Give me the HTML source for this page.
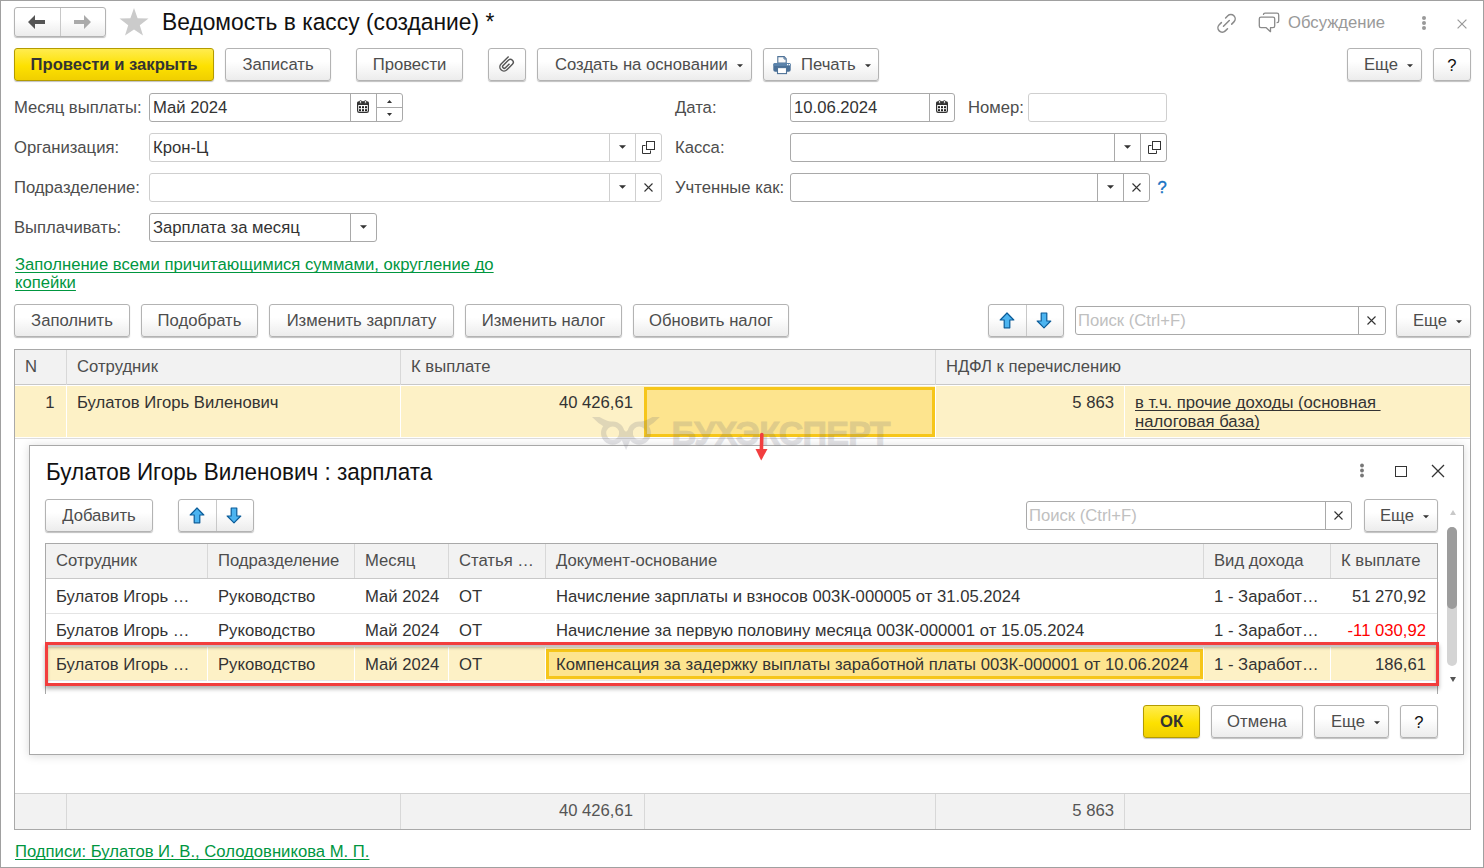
<!DOCTYPE html><html><head><meta charset="utf-8"><style>
*{margin:0;padding:0;box-sizing:border-box}
html,body{width:1484px;height:868px;overflow:hidden;background:#fff}
body{font-family:"Liberation Sans",sans-serif;font-size:16.67px;color:#4d4d4d;position:relative}
.t{position:absolute;white-space:nowrap}
.btn{position:absolute;padding-top:1px;border:1px solid #b3b3b3;border-radius:3px;background:linear-gradient(#fff 0%,#fff 40%,#ececec 100%);box-shadow:0 1px 1px rgba(0,0,0,.25);text-align:center;color:#4d4d4d;white-space:nowrap;font-size:16.67px}
.btn.yel{background:linear-gradient(#ffec4f 0%,#fde100 55%,#f0cf00 100%);border-color:#b39b00;color:#333;font-weight:bold}
.fld{position:absolute;border:1px solid #a9a9a9;border-radius:3px;background:#fff}
.fld.lt{border-color:#cfcfcf}
.dv{position:absolute;top:0;bottom:0;width:1px;background:#a9a9a9}
.fld.lt .dv{background:#cfcfcf}
.hl{position:absolute}
a,.lnk{color:#00963f;text-decoration:underline;text-underline-offset:2px;text-decoration-skip-ink:none}
.frame{position:absolute;left:0;top:0;width:1484px;height:868px;border:1px solid #a0a0a0;pointer-events:none;z-index:100}
</style></head><body><div class="frame"></div>
<div class="btn" style="left:14px;top:7px;width:92px;height:30px;"></div>
<div style="position:absolute;left:60px;top:8px;width:1px;height:28px;background:#c8c8c8"></div>
<svg style="position:absolute;left:28px;top:15px" width="18" height="14" viewBox="0 0 18 14"><path d="M0 7L7 0V5H17V9H7V14Z" fill="#555"/></svg>
<svg style="position:absolute;left:73px;top:15px" width="18" height="14" viewBox="0 0 18 14"><path d="M18 7L11 0V5H1V9H11V14Z" fill="#aaa"/></svg>
<svg style="position:absolute;left:119px;top:8px" width="30" height="28" viewBox="0 0 30 28"><path d="M15 0L18.6 10.3L29.5 10.6L20.8 17.2L24 27.6L15 21.4L6 27.6L9.2 17.2L0.5 10.6L11.4 10.3Z" fill="#cbcbcb"/></svg>
<div class="t" style="left:162px;top:8.1px;font-size:22.8px;line-height:28px;color:#111;transform:scaleY(1.06);transform-origin:0 21.9px">Ведомость в кассу (создание) *</div>
<svg style="position:absolute;left:1210px;top:8px" width="75" height="30" viewBox="1210 8 75 30"><g fill="none" stroke="#8a8a8a" stroke-width="1.5" stroke-linecap="round"><path d="M1225.6 18.0L1227.8 15.8A4.3 4.3 0 0 1 1233.9 21.9L1231.7 24.1"/><path d="M1221.4 22.6L1219.2 24.8A4.3 4.3 0 0 0 1225.3 30.9L1227.5 28.7"/><path d="M1223.5 26.2L1229.3 20.5"/></g><g fill="none" stroke="#8a8a8a" stroke-width="1.3" stroke-linejoin="round"><path d="M1261 17.1H1273Q1274.7 17.1 1274.7 18.8V26Q1274.7 27.7 1273 27.7H1270.5V31.7L1266.2 27.7H1261Q1259.3 27.7 1259.3 26V18.8Q1259.3 17.1 1261 17.1Z"/><path d="M1263.4 14.9Q1263.4 13.2 1265.1 13.2H1277Q1278.7 13.2 1278.7 14.9V20.9Q1278.7 22.6 1277 22.6H1276.6"/></g></svg>
<div class="t " style="top:12.72px;font-size:16.67px;line-height:20px;left:1288px;color:#999;">Обсуждение</div>
<svg style="position:absolute;left:1421px;top:15px" width="6" height="16" viewBox="0 0 6 16"><circle cx="3" cy="3" r="2" fill="#999"/><circle cx="3" cy="8" r="2" fill="#999"/><circle cx="3" cy="13" r="2" fill="#999"/></svg>
<svg style="position:absolute;left:1456.5px;top:18.5px" width="10" height="10" viewBox="0 0 10 10"><path d="M0.6 0.6L9.4 9.4M9.4 0.6L0.6 9.4" stroke="#999" stroke-width="1.2"/></svg>
<div class="btn yel" style="left:14px;top:48px;width:200px;height:33px;line-height:30px">Провести и закрыть</div>
<div class="btn" style="left:225px;top:48px;width:106px;height:33px;line-height:30px">Записать</div>
<div class="btn" style="left:356px;top:48px;width:107px;height:33px;line-height:30px">Провести</div>
<div class="btn" style="left:488px;top:48px;width:38px;height:33px;line-height:30px"><svg style="position:absolute;left:0;top:0" width="36" height="30" viewBox="0 0 36 30"><g transform="translate(17.3,15.6) rotate(45) scale(0.82) translate(-5,-9)"><path d="M0 0V13A5 5 0 0 0 10 13V3.5A3.5 3.5 0 0 0 3 3.5V12.5A2 2 0 0 0 7 12.5V5.5" fill="none" stroke="#555" stroke-width="1.75"/></g></svg></div>
<div class="btn" style="left:537px;top:48px;width:215px;height:33px;line-height:30px;text-align:left;padding-left:17px">Создать на основании<svg style="position:absolute;left:199px;top:15px" width="6" height="4" viewBox="0 0 6 4"><path d="M0 0.3H6L3 3.3Z" fill="#333"/></svg></div>
<div class="btn" style="left:763px;top:48px;width:116px;height:33px;line-height:30px;text-align:left;padding-left:37px">Печать<svg style="position:absolute;left:8px;top:6px" width="20" height="20" viewBox="0 0 20 20"><path d="M5.8 1.6H12.2L14.2 3.7V8H5.8Z" fill="#fafafa" stroke="#4f7398" stroke-width="1.1"/><path d="M12 1.8V4H14" fill="none" stroke="#4f7398" stroke-width="1"/><rect x="1.3" y="8.1" width="17.4" height="8.6" rx="2" fill="#4a7098"/><rect x="1.3" y="8.1" width="17.4" height="3" rx="1.5" fill="#5b83ab"/><rect x="15" y="9" width="1.2" height="1.2" fill="#fff"/><rect x="16.8" y="9" width="1.2" height="1.2" fill="#fff"/><rect x="5.5" y="12.6" width="9" height="6" fill="#fff" stroke="#4f7398" stroke-width="1.1"/></svg><svg style="position:absolute;left:101px;top:15px" width="6" height="4" viewBox="0 0 6 4"><path d="M0 0.3H6L3 3.3Z" fill="#333"/></svg></div>
<div class="btn" style="left:1347px;top:48px;width:75px;height:33px;line-height:30px;text-align:left;padding-left:16px">Еще<svg style="position:absolute;left:58.5px;top:14.7px" width="6" height="4" viewBox="0 0 6 4"><path d="M0 0.3H6L3 3.3Z" fill="#333"/></svg></div>
<div class="btn" style="left:1433px;top:48px;width:38px;height:33px;line-height:30px"><span style="color:#111;position:relative;top:1px">?</span></div>
<div class="t " style="top:98.22px;font-size:16.67px;line-height:20px;left:14px;color:#4d4d4d;">Месяц выплаты:</div>
<div class="t " style="top:138.22px;font-size:16.67px;line-height:20px;left:14px;color:#4d4d4d;">Организация:</div>
<div class="t " style="top:178.22px;font-size:16.67px;line-height:20px;left:14px;color:#4d4d4d;">Подразделение:</div>
<div class="t " style="top:218.22px;font-size:16.67px;line-height:20px;left:14px;color:#4d4d4d;">Выплачивать:</div>
<div class="t " style="top:98.22px;font-size:16.67px;line-height:20px;left:675px;color:#4d4d4d;">Дата:</div>
<div class="t " style="top:138.22px;font-size:16.67px;line-height:20px;left:675px;color:#4d4d4d;">Касса:</div>
<div class="t " style="top:178.22px;font-size:16.67px;line-height:20px;left:675px;color:#4d4d4d;">Учтенные как:</div>
<div class="t " style="top:98.22px;font-size:16.67px;line-height:20px;left:968px;color:#4d4d4d;">Номер:</div>
<div class="fld" style="left:149px;top:93px;width:254px;height:29px;"><div class="dv" style="left:200px"></div><div class="dv" style="left:226px"></div><svg style="position:absolute;left:207px;top:6px" width="12" height="13" viewBox="0 0 12 13"><rect x="0.6" y="1.8" width="10.8" height="10.6" rx="1.6" fill="#fff" stroke="#333" stroke-width="1.2"/><rect x="0.6" y="1.8" width="10.8" height="3.2" fill="#333"/><ellipse cx="3.6" cy="1.9" rx="1" ry="1.5" fill="#fff" stroke="#333" stroke-width="0.8"/><ellipse cx="8.4" cy="1.9" rx="1" ry="1.5" fill="#fff" stroke="#333" stroke-width="0.8"/><g fill="#222"><rect x="2" y="6.2" width="2" height="2"/><rect x="5" y="6.2" width="2" height="2"/><rect x="8" y="6.2" width="2" height="2"/><rect x="2" y="9.2" width="2" height="2"/><rect x="5" y="9.2" width="2" height="2"/><rect x="8" y="9.2" width="2" height="2"/></g></svg><div style="position:absolute;left:227px;top:13px;width:25px;height:1px;background:#a9a9a9"></div><svg style="position:absolute;left:236.5px;top:6px" width="5" height="3" viewBox="0 0 5 3"><path d="M0 3H5L2.5 0Z" fill="#333"/></svg><svg style="position:absolute;left:236.5px;top:19px" width="5" height="3" viewBox="0 0 5 3"><path d="M0 0H5L2.5 3Z" fill="#333"/></svg></div>
<div class="t " style="top:98.22px;font-size:16.67px;line-height:20px;left:153px;color:#333;">Май 2024</div>
<div class="fld lt" style="left:149px;top:133px;width:513px;height:29px;"><div class="dv" style="left:459px"></div><div class="dv" style="left:485px"></div><svg style="position:absolute;left:469px;top:11px" width="7" height="4" viewBox="0 0 7 4"><path d="M0 0.2H7L3.5 3.7Z" fill="#333"/></svg><svg style="position:absolute;left:492px;top:7px" width="13" height="13" viewBox="0 0 13 13"><path d="M3.5 4.5H0.5V12.5H8.5V9.5" fill="none" stroke="#333" stroke-width="1"/><rect x="4.5" y="0.5" width="8" height="8" fill="none" stroke="#333" stroke-width="1"/></svg></div>
<div class="t " style="top:138.22px;font-size:16.67px;line-height:20px;left:153px;color:#333;">Крон-Ц</div>
<div class="fld lt" style="left:149px;top:173px;width:513px;height:29px;"><div class="dv" style="left:459px"></div><div class="dv" style="left:485px"></div><svg style="position:absolute;left:469px;top:11px" width="7" height="4" viewBox="0 0 7 4"><path d="M0 0.2H7L3.5 3.7Z" fill="#333"/></svg><svg style="position:absolute;left:493.5px;top:9px" width="9" height="9" viewBox="0 0 9 9"><path d="M0.5 0.5L8.5 8.5M8.5 0.5L0.5 8.5" stroke="#333" stroke-width="1.1"/></svg></div>
<div class="fld" style="left:149px;top:213px;width:228px;height:29px;"><div class="dv" style="left:200px"></div><svg style="position:absolute;left:210px;top:11px" width="7" height="4" viewBox="0 0 7 4"><path d="M0 0.2H7L3.5 3.7Z" fill="#333"/></svg></div>
<div class="t " style="top:218.22px;font-size:16.67px;line-height:20px;left:153px;color:#333;">Зарплата за месяц</div>
<div class="fld" style="left:790px;top:93px;width:165px;height:29px;"><div class="dv" style="left:138px"></div><svg style="position:absolute;left:145px;top:6px" width="12" height="13" viewBox="0 0 12 13"><rect x="0.6" y="1.8" width="10.8" height="10.6" rx="1.6" fill="#fff" stroke="#333" stroke-width="1.2"/><rect x="0.6" y="1.8" width="10.8" height="3.2" fill="#333"/><ellipse cx="3.6" cy="1.9" rx="1" ry="1.5" fill="#fff" stroke="#333" stroke-width="0.8"/><ellipse cx="8.4" cy="1.9" rx="1" ry="1.5" fill="#fff" stroke="#333" stroke-width="0.8"/><g fill="#222"><rect x="2" y="6.2" width="2" height="2"/><rect x="5" y="6.2" width="2" height="2"/><rect x="8" y="6.2" width="2" height="2"/><rect x="2" y="9.2" width="2" height="2"/><rect x="5" y="9.2" width="2" height="2"/><rect x="8" y="9.2" width="2" height="2"/></g></svg></div>
<div class="t " style="top:98.22px;font-size:16.67px;line-height:20px;left:794px;color:#333;">10.06.2024</div>
<div class="fld lt" style="left:1028px;top:93px;width:139px;height:29px;"></div>
<div class="fld" style="left:790px;top:133px;width:377px;height:29px;"><div class="dv" style="left:323px"></div><div class="dv" style="left:349px"></div><svg style="position:absolute;left:333px;top:11px" width="7" height="4" viewBox="0 0 7 4"><path d="M0 0.2H7L3.5 3.7Z" fill="#333"/></svg><svg style="position:absolute;left:357px;top:7px" width="13" height="13" viewBox="0 0 13 13"><path d="M3.5 4.5H0.5V12.5H8.5V9.5" fill="none" stroke="#333" stroke-width="1"/><rect x="4.5" y="0.5" width="8" height="8" fill="none" stroke="#333" stroke-width="1"/></svg></div>
<div class="fld" style="left:790px;top:173px;width:360px;height:29px;"><div class="dv" style="left:306px"></div><div class="dv" style="left:332px"></div><svg style="position:absolute;left:316px;top:11px" width="7" height="4" viewBox="0 0 7 4"><path d="M0 0.2H7L3.5 3.7Z" fill="#333"/></svg><svg style="position:absolute;left:340.5px;top:9px" width="9" height="9" viewBox="0 0 9 9"><path d="M0.5 0.5L8.5 8.5M8.5 0.5L0.5 8.5" stroke="#333" stroke-width="1.1"/></svg></div>
<div class="t " style="top:178.22px;font-size:16.67px;line-height:20px;left:1157.5px;color:#1a73c4;-webkit-text-stroke:0.4px #1a73c4">?</div>
<div class="t lnk" style="top:254.72px;font-size:16.67px;line-height:20px;left:15px;">Заполнение всеми причитающимися суммами, округление до</div>
<div class="t lnk" style="top:272.92px;font-size:16.67px;line-height:20px;left:15px;">копейки</div>
<div class="btn" style="left:14px;top:304px;width:116px;height:33px;line-height:30px">Заполнить</div>
<div class="btn" style="left:141px;top:304px;width:117px;height:33px;line-height:30px">Подобрать</div>
<div class="btn" style="left:269px;top:304px;width:185px;height:33px;line-height:30px">Изменить зарплату</div>
<div class="btn" style="left:465px;top:304px;width:157px;height:33px;line-height:30px">Изменить налог</div>
<div class="btn" style="left:633px;top:304px;width:156px;height:33px;line-height:30px">Обновить налог</div>
<div class="btn" style="left:988px;top:304px;width:76px;height:33px"><div style="position:absolute;left:37px;top:0;bottom:0;width:1px;background:#c8c8c8"></div><svg style="position:absolute;left:10px;top:7px" width="16" height="17" viewBox="0 0 16 17"><path d="M8 1L14.8 8H10.8V15.8H5.2V8H1.2Z" fill="#4cb4f0" stroke="#0b5c99" stroke-width="1.2" stroke-linejoin="round"/></svg><svg style="position:absolute;left:47px;top:7px" width="16" height="17" viewBox="0 0 16 17"><path d="M5.2 1H10.8V9H14.8L8 15.8L1.2 9H5.2Z" fill="#4cb4f0" stroke="#0b5c99" stroke-width="1.2" stroke-linejoin="round"/></svg></div>
<div class="fld" style="left:1075px;top:306px;width:311px;height:29px;"><div class="dv" style="left:282px"></div><svg style="position:absolute;left:290.5px;top:9px" width="9" height="9" viewBox="0 0 9 9"><path d="M0.5 0.5L8.5 8.5M8.5 0.5L0.5 8.5" stroke="#333" stroke-width="1.1"/></svg></div>
<div class="t " style="top:311.22px;font-size:16.67px;line-height:20px;left:1078px;color:#c0c0c0;">Поиск (Ctrl+F)</div>
<div class="btn" style="left:1396px;top:304px;width:75px;height:33px;line-height:30px;text-align:left;padding-left:16px">Еще<svg style="position:absolute;left:58.5px;top:14.7px" width="6" height="4" viewBox="0 0 6 4"><path d="M0 0.3H6L3 3.3Z" fill="#333"/></svg></div>
<div style="position:absolute;left:14px;top:349px;width:1457px;height:481px;border:1px solid #a9a9a9;background:#fff"></div>
<div style="position:absolute;left:15px;top:350px;width:1455px;height:35px;background:#f2f2f2;border-bottom:1px solid #c8c8c8"></div>
<div style="position:absolute;left:66px;top:350px;width:1px;height:35px;background:#d8d8d8"></div>
<div style="position:absolute;left:400px;top:350px;width:1px;height:35px;background:#d8d8d8"></div>
<div style="position:absolute;left:935px;top:350px;width:1px;height:35px;background:#d8d8d8"></div>
<div class="t " style="top:357.22px;font-size:16.67px;line-height:20px;left:25px;color:#4d4d4d;">N</div>
<div class="t " style="top:357.22px;font-size:16.67px;line-height:20px;left:77px;color:#4d4d4d;">Сотрудник</div>
<div class="t " style="top:357.22px;font-size:16.67px;line-height:20px;left:411px;color:#4d4d4d;">К выплате</div>
<div class="t " style="top:357.22px;font-size:16.67px;line-height:20px;left:946px;color:#4d4d4d;">НДФЛ к перечислению</div>
<div style="position:absolute;left:15px;top:386px;width:1455px;height:51px;background:#fdf1c6"></div>
<div style="position:absolute;left:15px;top:438px;width:1455px;height:1px;background:#dedede"></div>
<div style="position:absolute;left:66px;top:386px;width:1px;height:51px;background:#fff"></div>
<div style="position:absolute;left:400px;top:386px;width:1px;height:51px;background:#fff"></div>
<div style="position:absolute;left:935px;top:386px;width:1px;height:51px;background:#fff"></div>
<div style="position:absolute;left:1124px;top:386px;width:1px;height:51px;background:#fff"></div>
<div style="position:absolute;left:644px;top:387px;width:291px;height:50px;background:#fde48e;border:3px solid #f6c61a"></div>
<div class="t " style="top:393.22px;font-size:16.67px;line-height:20px;right:1429.5px;color:#333;">1</div>
<div class="t " style="top:393.22px;font-size:16.67px;line-height:20px;left:77px;color:#333;">Булатов Игорь Виленович</div>
<div class="t " style="top:393.22px;font-size:16.67px;line-height:20px;right:851px;color:#333;">40 426,61</div>
<div class="t " style="top:393.22px;font-size:16.67px;line-height:20px;right:370px;color:#333;">5 863</div>
<div class="t " style="top:393.22px;font-size:16.67px;line-height:20px;left:1135px;color:#333;text-decoration:underline;text-underline-offset:2px;text-decoration-skip-ink:none">в т.ч. прочие доходы (основная&nbsp;</div>
<div class="t " style="top:412.22px;font-size:16.67px;line-height:20px;left:1135px;color:#333;text-decoration:underline;text-underline-offset:2px;text-decoration-skip-ink:none">налоговая база)</div>
<div style="position:absolute;left:15px;top:793px;width:1455px;height:36px;background:#f2f2f2;border-top:1px solid #d0d0d0"></div>
<div style="position:absolute;left:66px;top:794px;width:1px;height:35px;background:#d8d8d8"></div>
<div style="position:absolute;left:400px;top:794px;width:1px;height:35px;background:#d8d8d8"></div>
<div style="position:absolute;left:644px;top:794px;width:1px;height:35px;background:#d8d8d8"></div>
<div style="position:absolute;left:935px;top:794px;width:1px;height:35px;background:#d8d8d8"></div>
<div style="position:absolute;left:1124px;top:794px;width:1px;height:35px;background:#d8d8d8"></div>
<div class="t " style="top:801.22px;font-size:16.67px;line-height:20px;right:851px;color:#555;">40 426,61</div>
<div class="t " style="top:801.22px;font-size:16.67px;line-height:20px;right:370px;color:#555;">5 863</div>
<div class="t lnk" style="top:842.22px;font-size:16.67px;line-height:20px;left:15px;">Подписи: Булатов И. В., Солодовникова М. П.</div>
<div style="position:absolute;left:29px;top:445px;width:1435px;height:310px;background:#fff;border:1px solid #a8a8a8;box-shadow:0 1px 9px rgba(0,0,0,.15)"></div>
<div class="t" style="left:46px;top:459.2px;font-size:22.5px;line-height:28px;color:#111;transform:scaleY(1.08);transform-origin:0 21.8px">Булатов Игорь Виленович : зарплата</div>
<svg style="position:absolute;left:1359px;top:463px" width="6" height="15" viewBox="0 0 6 15"><circle cx="3" cy="2.5" r="1.9" fill="#777"/><circle cx="3" cy="7.5" r="1.9" fill="#777"/><circle cx="3" cy="12.5" r="1.9" fill="#777"/></svg>
<div style="position:absolute;left:1395px;top:466px;width:12px;height:11px;border:1.3px solid #333"></div>
<svg style="position:absolute;left:1431px;top:464px" width="14" height="14" viewBox="0 0 14 14"><path d="M1 1L13 13M13 1L1 13" stroke="#333" stroke-width="1.3"/></svg>
<div class="btn" style="left:45px;top:499px;width:108px;height:33px;line-height:30px">Добавить</div>
<div class="btn" style="left:178px;top:499px;width:76px;height:33px"><div style="position:absolute;left:37px;top:0;bottom:0;width:1px;background:#c8c8c8"></div><svg style="position:absolute;left:10px;top:7px" width="16" height="17" viewBox="0 0 16 17"><path d="M8 1L14.8 8H10.8V15.8H5.2V8H1.2Z" fill="#4cb4f0" stroke="#0b5c99" stroke-width="1.2" stroke-linejoin="round"/></svg><svg style="position:absolute;left:47px;top:7px" width="16" height="17" viewBox="0 0 16 17"><path d="M5.2 1H10.8V9H14.8L8 15.8L1.2 9H5.2Z" fill="#4cb4f0" stroke="#0b5c99" stroke-width="1.2" stroke-linejoin="round"/></svg></div>
<div class="fld" style="left:1026px;top:501px;width:326px;height:29px;"><div class="dv" style="left:298px"></div><svg style="position:absolute;left:307px;top:9px" width="9" height="9" viewBox="0 0 9 9"><path d="M0.5 0.5L8.5 8.5M8.5 0.5L0.5 8.5" stroke="#333" stroke-width="1.1"/></svg></div>
<div class="t " style="top:506.22px;font-size:16.67px;line-height:20px;left:1029px;color:#c0c0c0;">Поиск (Ctrl+F)</div>
<div class="btn" style="left:1364px;top:499px;width:74px;height:33px;line-height:30px;text-align:left;padding-left:15px">Еще<svg style="position:absolute;left:57.5px;top:14.7px" width="6" height="4" viewBox="0 0 6 4"><path d="M0 0.3H6L3 3.3Z" fill="#333"/></svg></div>
<div style="position:absolute;left:45px;top:543px;width:1393px;height:151px;border:1px solid #a9a9a9;border-bottom:none;background:#fff"></div>
<div style="position:absolute;left:46px;top:544px;width:1391px;height:35px;background:#f2f2f2;border-bottom:1px solid #c8c8c8"></div>
<div style="position:absolute;left:207px;top:544px;width:1px;height:34px;background:#d8d8d8"></div>
<div style="position:absolute;left:354px;top:544px;width:1px;height:34px;background:#d8d8d8"></div>
<div style="position:absolute;left:448px;top:544px;width:1px;height:34px;background:#d8d8d8"></div>
<div style="position:absolute;left:545px;top:544px;width:1px;height:34px;background:#d8d8d8"></div>
<div style="position:absolute;left:1203px;top:544px;width:1px;height:34px;background:#d8d8d8"></div>
<div style="position:absolute;left:1330px;top:544px;width:1px;height:34px;background:#d8d8d8"></div>
<div class="t " style="top:551.22px;font-size:16.67px;line-height:20px;left:56px;color:#4d4d4d;">Сотрудник</div>
<div class="t " style="top:551.22px;font-size:16.67px;line-height:20px;left:218px;color:#4d4d4d;">Подразделение</div>
<div class="t " style="top:551.22px;font-size:16.67px;line-height:20px;left:365px;color:#4d4d4d;">Месяц</div>
<div class="t " style="top:551.22px;font-size:16.67px;line-height:20px;left:459px;color:#4d4d4d;">Статья …</div>
<div class="t " style="top:551.22px;font-size:16.67px;line-height:20px;left:556px;color:#4d4d4d;">Документ-основание</div>
<div class="t " style="top:551.22px;font-size:16.67px;line-height:20px;left:1214px;color:#4d4d4d;">Вид дохода</div>
<div class="t " style="top:551.22px;font-size:16.67px;line-height:20px;left:1341px;color:#4d4d4d;">К выплате</div>
<div style="position:absolute;left:46px;top:613px;width:1391px;height:1px;background:#e4e4e4"></div>
<div style="position:absolute;left:46px;top:647px;width:1391px;height:34px;background:#fdf1c6;border-bottom:1px solid #e6e6e6"></div>
<div style="position:absolute;left:207px;top:647px;width:1px;height:34px;background:#fff"></div>
<div style="position:absolute;left:354px;top:647px;width:1px;height:34px;background:#fff"></div>
<div style="position:absolute;left:448px;top:647px;width:1px;height:34px;background:#fff"></div>
<div style="position:absolute;left:545px;top:647px;width:1px;height:34px;background:#fff"></div>
<div style="position:absolute;left:1203px;top:647px;width:1px;height:34px;background:#fff"></div>
<div style="position:absolute;left:1330px;top:647px;width:1px;height:34px;background:#fff"></div>
<div style="position:absolute;left:546px;top:649px;width:657px;height:30px;background:#fde48e;border:3px solid #f6c61a"></div>
<div class="t " style="top:587.22px;font-size:16.67px;line-height:20px;left:56px;color:#333;">Булатов Игорь …</div>
<div class="t " style="top:587.22px;font-size:16.67px;line-height:20px;left:218px;color:#333;">Руководство</div>
<div class="t " style="top:587.22px;font-size:16.67px;line-height:20px;left:365px;color:#333;">Май 2024</div>
<div class="t " style="top:587.22px;font-size:16.67px;line-height:20px;left:459px;color:#333;">ОТ</div>
<div class="t " style="top:587.22px;font-size:16.67px;line-height:20px;left:556px;color:#333;">Начисление зарплаты и взносов 003К-000005 от 31.05.2024</div>
<div class="t " style="top:587.22px;font-size:16.67px;line-height:20px;left:1214px;color:#333;">1 - Заработ…</div>
<div class="t " style="top:587.22px;font-size:16.67px;line-height:20px;right:58px;color:#333;">51 270,92</div>
<div class="t " style="top:621.22px;font-size:16.67px;line-height:20px;left:56px;color:#333;">Булатов Игорь …</div>
<div class="t " style="top:621.22px;font-size:16.67px;line-height:20px;left:218px;color:#333;">Руководство</div>
<div class="t " style="top:621.22px;font-size:16.67px;line-height:20px;left:365px;color:#333;">Май 2024</div>
<div class="t " style="top:621.22px;font-size:16.67px;line-height:20px;left:459px;color:#333;">ОТ</div>
<div class="t " style="top:621.22px;font-size:16.67px;line-height:20px;left:556px;color:#333;">Начисление за первую половину месяца 003К-000001 от 15.05.2024</div>
<div class="t " style="top:621.22px;font-size:16.67px;line-height:20px;left:1214px;color:#333;">1 - Заработ…</div>
<div class="t " style="top:621.22px;font-size:16.67px;line-height:20px;right:58px;color:#ff0000;">-11 030,92</div>
<div class="t " style="top:655.22px;font-size:16.67px;line-height:20px;left:56px;color:#333;">Булатов Игорь …</div>
<div class="t " style="top:655.22px;font-size:16.67px;line-height:20px;left:218px;color:#333;">Руководство</div>
<div class="t " style="top:655.22px;font-size:16.67px;line-height:20px;left:365px;color:#333;">Май 2024</div>
<div class="t " style="top:655.22px;font-size:16.67px;line-height:20px;left:459px;color:#333;">ОТ</div>
<div class="t " style="top:655.22px;font-size:16.67px;line-height:20px;left:556px;color:#333;">Компенсация за задержку выплаты заработной платы 003К-000001 от 10.06.2024</div>
<div class="t " style="top:655.22px;font-size:16.67px;line-height:20px;left:1214px;color:#333;">1 - Заработ…</div>
<div class="t " style="top:655.22px;font-size:16.67px;line-height:20px;right:58px;color:#333;">186,61</div>
<div style="position:absolute;left:45px;top:642px;width:1394px;height:44px;border:3px solid #f23d3d;box-shadow:0 3px 4px rgba(0,0,0,.3), inset 0 3px 3px rgba(0,0,0,.25)"></div>
<svg style="position:absolute;left:1449.5px;top:510px" width="6" height="5" viewBox="0 0 6 5"><path d="M0 5H6L3 0Z" fill="#c8c8c8"/></svg>
<div style="position:absolute;left:1447px;top:527px;width:10px;height:139px;border-radius:5px;background:#d4d4d4"></div>
<div style="position:absolute;left:1447px;top:527px;width:10px;height:82px;border-radius:5px;background:#9c9c9c"></div>
<svg style="position:absolute;left:1449.5px;top:677px" width="6" height="5" viewBox="0 0 6 5"><path d="M0 0H6L3 5Z" fill="#555"/></svg>
<div class="btn yel" style="left:1143px;top:705px;width:57px;height:33px;line-height:30px">ОК</div>
<div class="btn" style="left:1211px;top:705px;width:92px;height:33px;line-height:30px">Отмена</div>
<div class="btn" style="left:1314px;top:705px;width:75px;height:33px;line-height:30px;text-align:left;padding-left:16px">Еще<svg style="position:absolute;left:58.5px;top:14.7px" width="6" height="4" viewBox="0 0 6 4"><path d="M0 0.3H6L3 3.3Z" fill="#333"/></svg></div>
<div class="btn" style="left:1400px;top:705px;width:38px;height:33px;line-height:30px"><span style="color:#111;position:relative;top:1px">?</span></div>
<div class="t" style="left:671.5px;top:413px;font-size:34px;line-height:40px;font-weight:bold;color:#6e6e7d;opacity:.2;-webkit-text-stroke:1px #6e6e7d;letter-spacing:-0.75px">БУХЭКСПЕРТ</div>
<svg style="position:absolute;left:585px;top:405px" width="80" height="50" viewBox="585 405 80 50"><g opacity=".2"><g fill="none" stroke="#6e6e7d" stroke-width="5.2"><circle cx="612.7" cy="433.1" r="9.1"/><circle cx="639.2" cy="433.1" r="9.1"/></g><g fill="#6e6e7d"><path d="M619 426L626 431.8L633 426V440H619Z"/><path d="M621.5 439.5L630.5 439.5L626.1 450Z"/><path d="M592 417L599.5 417Q607 421.5 615 422.5L606 428Q598 423.5 592 417Z"/><path d="M659.9 417L652.4 417Q644.9 421.5 636.9 422.5L645.9 428Q653.9 423.5 659.9 417Z"/></g></g></svg>
<svg style="position:absolute;left:754px;top:432px" width="15" height="30" viewBox="0 0 15 30"><path d="M7.8 2.6L7.4 18" stroke="#f23e3f" stroke-width="3.6" stroke-linecap="round"/><path d="M1.5 17H13.5L7.2 28.5Z" fill="#f23e3f"/></svg></body></html>
